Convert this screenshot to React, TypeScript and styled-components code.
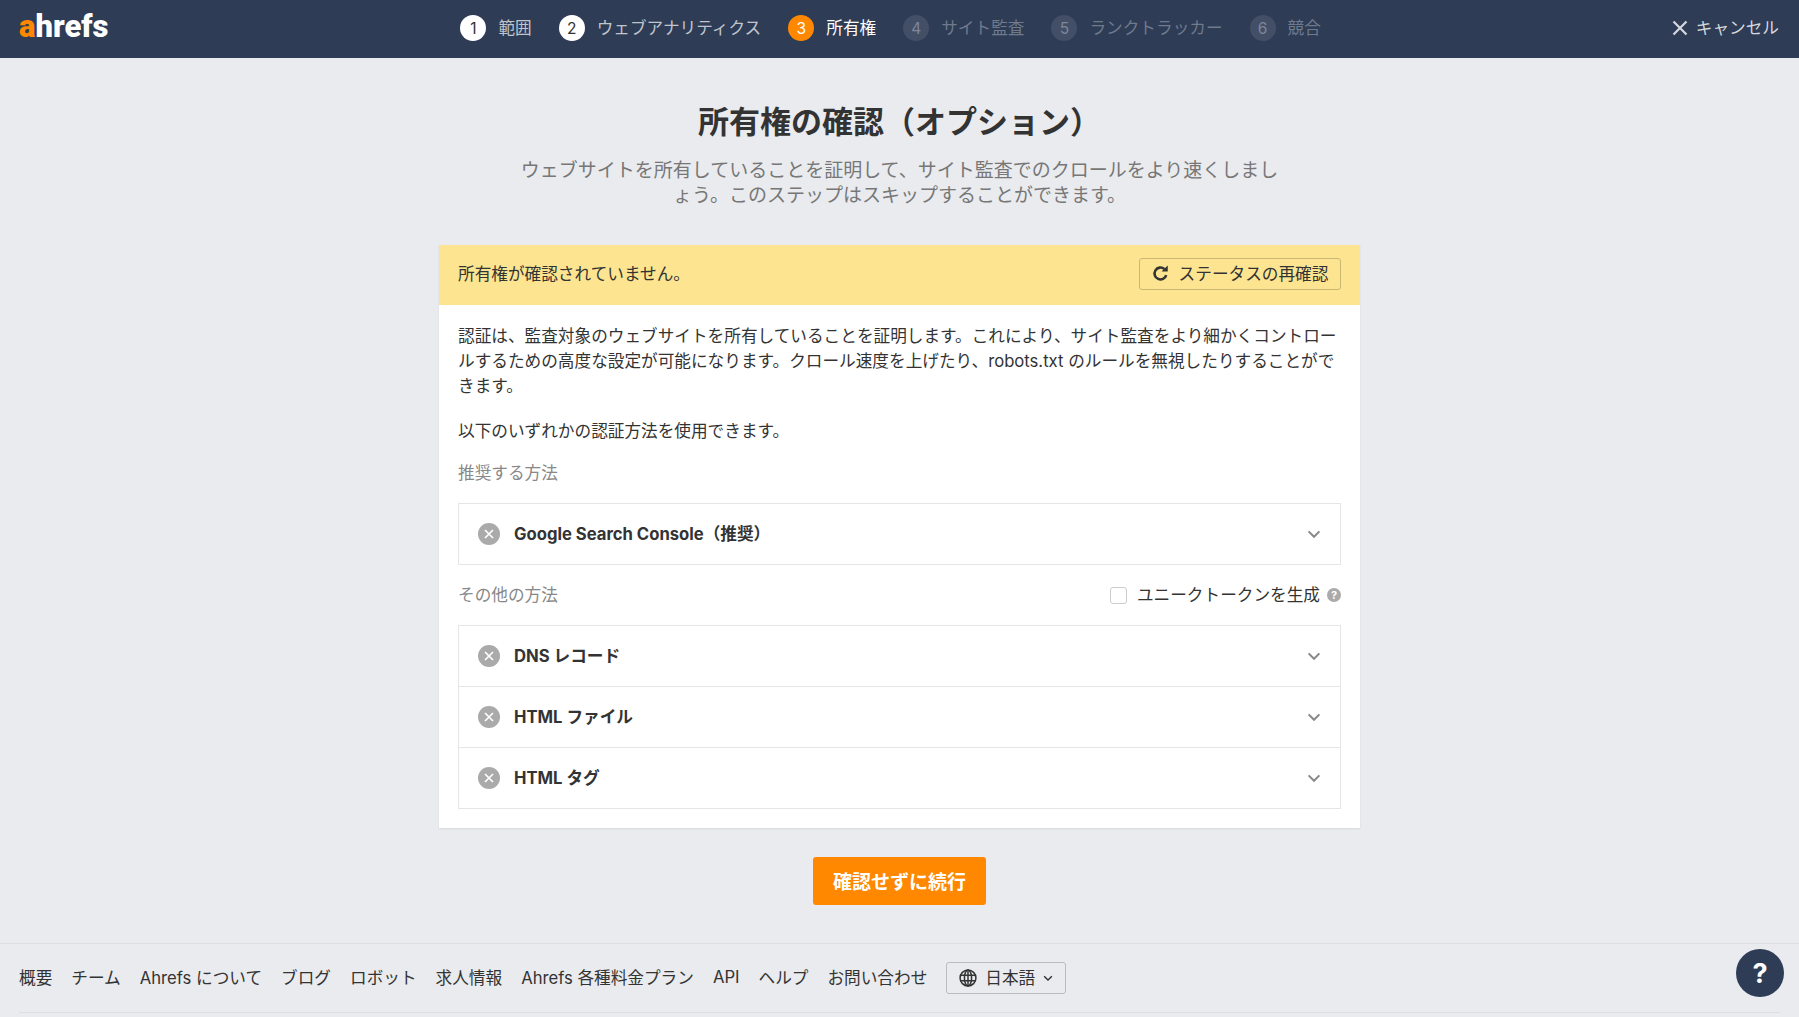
import React from 'react';
import styled, { createGlobalStyle } from 'styled-components';

const Global = createGlobalStyle`
  html, body { margin: 0; padding: 0; height: 100%; overflow: hidden; background: #e9ebee; }
  body { font-family: Inter, "Noto Sans CJK JP", "Noto Sans", sans-serif; color: #333; }
  * { box-sizing: border-box; }
`;
const Page = styled.div`height: 1017px; display: flex; flex-direction: column; position: relative; overflow: hidden;`;
const Header = styled.header`height: 58px; flex: none; background: #2e3c56; display: flex; align-items: center; justify-content: space-between; padding: 0 20px 2px 19px; position: relative;`;
const Logo = styled.div`font-family: Roboto, sans-serif; font-weight: 900; font-size: 31px; color: #fff; line-height: 1; margin-top: -3px; span { color: #ff8800; }`;
const Steps = styled.nav`display: flex; align-items: center; gap: 27px; margin-left: 1px;`;
const Step = styled.div<{ $state: string }>`
  display: flex; align-items: center; gap: 12px; font-size: 16.65px;
  color: ${p => p.$state === 'active' ? '#fff' : p.$state === 'done' ? '#c0c5cd' : '#6f7a8c'};
`;
const StepLabel = styled.span`padding-bottom: 2px;`;
const StepNum = styled.span<{ $state: string }>`
  width: 26px; height: 26px; border-radius: 50%; display: flex; align-items: center; justify-content: center; font-size: 15.5px;
  background: ${p => p.$state === 'active' ? '#ff8800' : p.$state === 'done' ? '#fff' : '#434f67'};
  color: ${p => p.$state === 'active' ? '#fff' : p.$state === 'done' ? '#333' : '#7d8799'};
`;
const Cancel = styled.div`display: flex; align-items: center; gap: 8px; color: #d5d8dd; font-size: 16.65px;`;
const Main = styled.main`flex: 1; display: flex; flex-direction: column; align-items: center; padding-top: 44px;`;
const Title = styled.h1`margin: 0; font-size: 31px; line-height: 40px; font-weight: 700; color: #333;`;
const Sub = styled.p`margin: 16px 0 0; width: 762px; text-align: center; font-size: 19px; line-height: 25px; color: #777;`;
const Card = styled.section`width: 921px; margin-top: 37px; background: #fff; box-shadow: 0 1px 2px rgba(0,0,0,.08);`;
const Banner = styled.div`height: 60px; background: #fce490; display: flex; align-items: center; justify-content: space-between; padding: 0 19px 2px; font-size: 16.65px;`;
const BannerText = styled.span`padding-bottom: 2px;`;
const RecheckBtn = styled.button`height: 32px; width: 202px; border: 1px solid #c9b873; border-radius: 3px; background: transparent; display: flex; align-items: center; justify-content: center; gap: 10px; font: inherit; font-size: 16.65px; color: #333; padding: 0 0 2px;`;
const Body = styled.div`padding: 19px 19px 19px;`;
const Para = styled.p<{ $gap: number }>`margin: 0 0 ${p => p.$gap}px; font-size: 16.65px; line-height: 25px; color: #333;`;
const SectionRow = styled.div`display: flex; align-items: center; justify-content: space-between; height: 25px;`;
const SectionLabel = styled.span`font-size: 16.65px; color: #888;`;
const Group = styled.div`border: 1px solid #e6e6e6; margin: 19px 0 16px; &:last-child { margin-bottom: 0; }`;
const Row = styled.div`height: 60px; display: flex; align-items: center; padding: 0 19px; gap: 14px; font-weight: 700; font-size: 16.65px; color: #333; & + & { border-top: 1px solid #e6e6e6; height: 61px; }`;
const Grow = styled.span`flex: 1; padding-bottom: 3px;`;
const Tokens = styled.label`display: flex; align-items: center; font-size: 16.65px; color: #333;`;
const Check = styled.span`width: 17px; height: 17px; margin-top: 3px; border: 1px solid #ccc; border-radius: 3px; background: #fff; margin-right: 10px;`;
const Cta = styled.button`margin-top: 29px; width: 173px; height: 48px; border: 0; border-radius: 3px; background: #ff8800; color: #fff; font: inherit; font-weight: 700; font-size: 19px; padding: 0 0 2px;`;
const Footer = styled.footer`height: 74px; flex: none; border-top: 1px solid #dcdee1; position: relative; display: flex; flex-direction: column;`;
const FootRow = styled.div`height: 69px; margin: 0 19px; display: flex; align-items: center; gap: 19px; font-size: 16.65px; color: #333; border-bottom: 1px solid #dcdee1;`;
const FootLink = styled.span`padding-bottom: 2px;`;
const Lang = styled.div`width: 120px; height: 32px; border: 1px solid #bbb; border-radius: 3px; display: flex; align-items: center; justify-content: center; gap: 8px;`;
const Help = styled.div`position: absolute; right: 15px; top: 5px; width: 48px; height: 48px; border-radius: 50%; background: #2e3c56; color: #fff; font-weight: 700; font-size: 27px; display: flex; align-items: center; justify-content: center;`;

const X = ({ size = 16, color = '#d5d8dd' }: { size?: number; color?: string }) => (
  <svg width={size} height={size} viewBox="0 0 16 16"><path d="M1.5 1.5l13 13M14.5 1.5l-13 13" stroke={color} strokeWidth="2.2" /></svg>
);
const Status = () => (
  <svg width="22" height="22" viewBox="0 0 22 22"><circle cx="11" cy="11" r="11" fill="#aaa" /><path d="M7 7l8 8M15 7l-8 8" stroke="#fff" strokeWidth="1.7" /></svg>
);
const Chevron = ({ size = 14, color = '#888', width = 2 }: { size?: number; color?: string; width?: number }) => (
  <svg width={size} height={size} viewBox="0 0 14 14"><path d="M1.6 4.4l5.4 5.4 5.4-5.4" fill="none" stroke={color} strokeWidth={width} /></svg>
);
const Refresh = () => (
  <svg width="17" height="17" viewBox="0 0 16 16"><path d="M13.4 9.5A5.6 5.6 0 1 1 11.6 3.7" fill="none" stroke="#333" strokeWidth="2.4" /><path d="M9 6.2h5.8V.4z" fill="#333" /></svg>
);
const Globe = () => (
  <svg width="18" height="18" viewBox="0 0 17 17" fill="none" stroke="#333" strokeWidth="1.4"><circle cx="8.5" cy="8.5" r="7.5" /><ellipse cx="8.5" cy="8.5" rx="3.4" ry="7.5" /><path d="M1.4 6h14.2M1.4 11h14.2M8.5 1v15" /></svg>
);
const HelpDot = () => (
  <svg width="14" height="14" viewBox="0 0 14 14" style={{ marginLeft: 7, marginTop: 3 }}><circle cx="7" cy="7" r="7" fill="#aaa" /><text x="7" y="11" textAnchor="middle" fontSize="11" fontWeight="700" fill="#fff" fontFamily="Inter, sans-serif">?</text></svg>
);

const steps = [['1','範囲','done'],['2','ウェブアナリティクス','done'],['3','所有権','active'],['4','サイト監査','todo'],['5','ランクトラッカー','todo'],['6','競合','todo']];
const links = ['概要','チーム','Ahrefs について','ブログ','ロボット','求人情報','Ahrefs 各種料金プラン','API','ヘルプ','お問い合わせ'];

const Method = ({ label }: { label: string }) => (
  <Row><Status /><Grow>{label}</Grow><Chevron /></Row>
);

export default function App() {
  return (
    <Page>
      <Global />
      <Header>
        <Logo><span>a</span>hrefs</Logo>
        <Steps>
          {steps.map(([n, t, s]) => (
            <Step key={n} $state={s}><StepNum $state={s}>{n}</StepNum><StepLabel>{t}</StepLabel></Step>
          ))}
        </Steps>
        <Cancel><X /><StepLabel>キャンセル</StepLabel></Cancel>
      </Header>
      <Main>
        <Title>所有権の確認（オプション）</Title>
        <Sub>ウェブサイトを所有していることを証明して、サイト監査でのクロールをより速くしましょう。このステップはスキップすることができます。</Sub>
        <Card>
          <Banner>
            <BannerText>所有権が確認されていません。</BannerText>
            <RecheckBtn><Refresh />ステータスの再確認</RecheckBtn>
          </Banner>
          <Body>
            <Para $gap={20}>認証は、監査対象のウェブサイトを所有していることを証明します。これにより、サイト監査をより細かくコントロールするための高度な設定が可能になります。クロール速度を上げたり、robots.txt のルールを無視したりすることができます。</Para>
            <Para $gap={15}>以下のいずれかの認証方法を使用できます。</Para>
            <SectionRow><SectionLabel>推奨する方法</SectionLabel></SectionRow>
            <Group><Method label="Google Search Console（推奨）" /></Group>
            <SectionRow>
              <SectionLabel>その他の方法</SectionLabel>
              <Tokens><Check />ユニークトークンを生成<HelpDot /></Tokens>
            </SectionRow>
            <Group>
              <Method label="DNS レコード" />
              <Method label="HTML ファイル" />
              <Method label="HTML タグ" />
            </Group>
          </Body>
        </Card>
        <Cta>確認せずに続行</Cta>
      </Main>
      <Footer>
        <FootRow>
          {links.map(l => <FootLink key={l}>{l}</FootLink>)}
          <Lang><Globe /><FootLink>日本語</FootLink><Chevron size={10} color="#333" /></Lang>
        </FootRow>
        <Help>?</Help>
      </Footer>
    </Page>
  );
}
